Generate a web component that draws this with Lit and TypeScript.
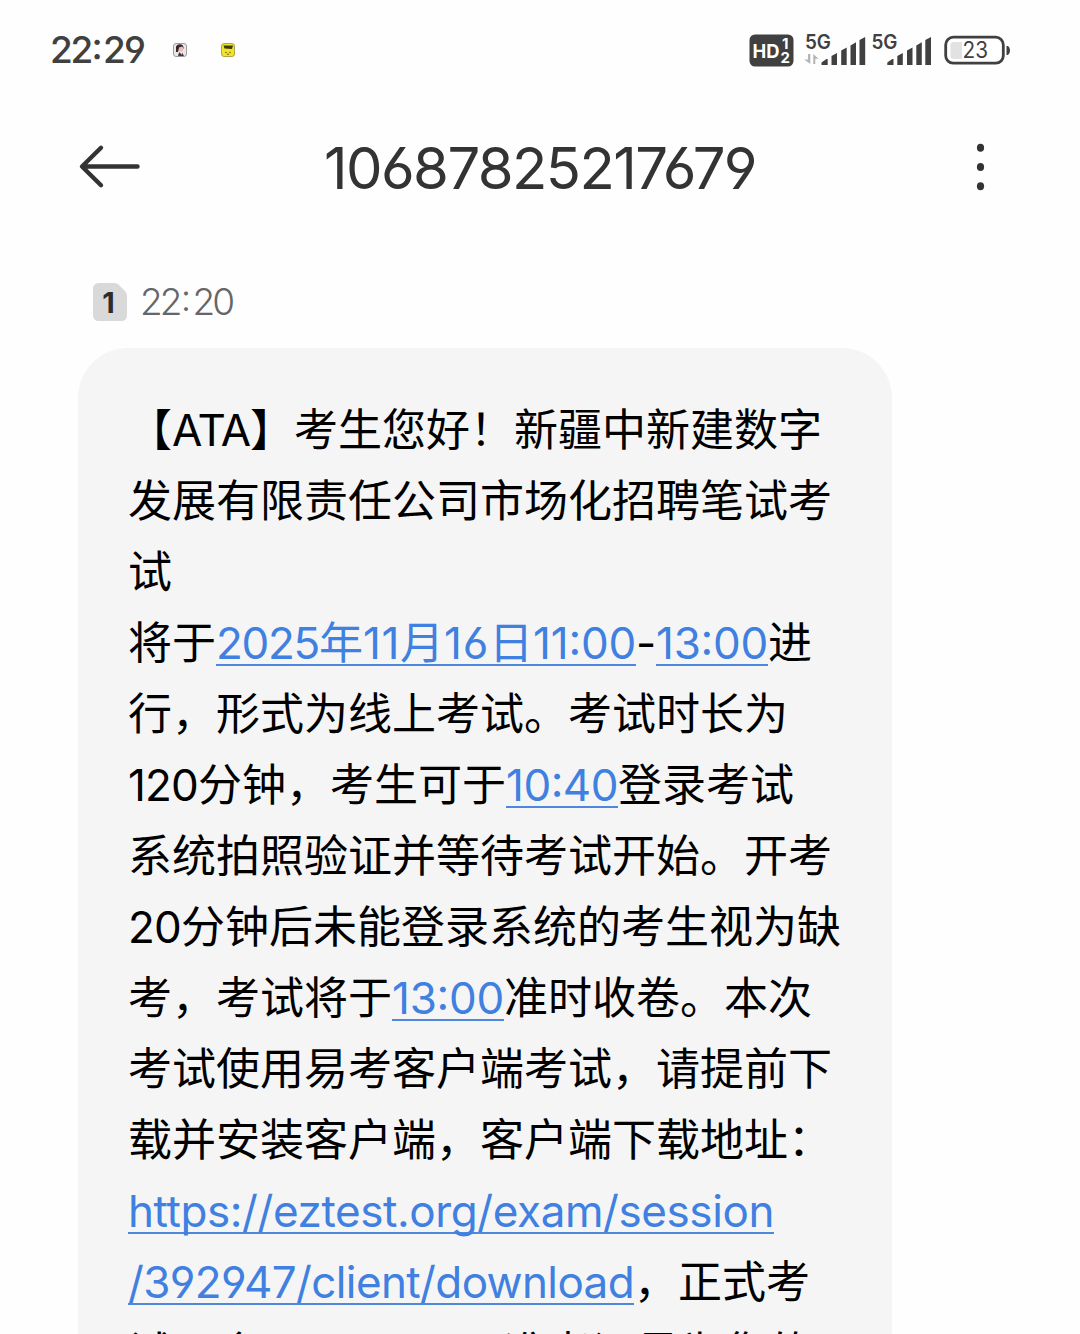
import { LitElement, html, css, svg } from "lit";
import { customElement } from "lit/decorators.js";

interface Run {
  text: string;
  link?: boolean;
  width?: number;
}

const t = (text: string, width?: number): Run => ({ text, width });
const a = (text: string, width?: number): Run => ({ text, width, link: true });

const LINES: Run[][] = [
  [t("【"), t("ATA", 78), t("】考生您好！新疆中新建数字")],
  [t("发展有限责任公司市场化招聘笔试考")],
  [t("试")],
  [
    t("将于"),
    a("2025", 103),
    a("年"),
    a("11", 37),
    a("月"),
    a("16", 45),
    a("日"),
    a("11:00", 103),
    t("-", 20),
    a("13:00", 112),
    t("进"),
  ],
  [t("行，形式为线上考试。考试时长为")],
  [t("120", 70), t("分钟，考生可于"), a("10:40", 112), t("登录考试")],
  [t("系统拍照验证并等待考试开始。开考")],
  [t("20", 53), t("分钟后未能登录系统的考生视为缺")],
  [t("考，考试将于"), a("13:00", 112), t("准时收卷。本次")],
  [t("考试使用易考客户端考试，请提前下")],
  [t("载并安装客户端，客户端下载地址：")],
  [a("https://eztest.org/exam/session", 646)],
  [a("/392947/client/download", 506), t("，正式考")],
  [t("试口令："), t("39294716", 200), t("准考证号为您的")],
];

const bars = svg`
  <path d="M0 28.5V26l5-3.5h1.2v6z"/>
  <path d="M10 28.5V19.6l5.5-3v11.9z"/>
  <path d="M19.7 28.5V14l5.5-3v17.5z"/>
  <path d="M29 28.5V9l5.5-3.2v22.7z"/>
  <path d="M38 28.5V3.5L43.7.5v28z"/>`;

@customElement("app-root")
export class AppRoot extends LitElement {
  static styles = css`
    :host {
      display: block;
      height: 1334px;
      overflow: hidden;
      background: #fefefe;
      color: #333;
      font-family: Inter, "Noto Sans CJK SC", sans-serif;
      font-feature-settings: "cv03", "cv04", "calt";
    }
    svg {
      display: block;
      flex: none;
      overflow: visible;
    }
    .status {
      display: flex;
      align-items: center;
      height: 100px;
      padding: 0 69px 0 50px;
      box-sizing: border-box;
    }
    .clock {
      display: flex;
      font-size: 37px;
      font-weight: 500;
      line-height: 46px;
      color: #404040;
      white-space: nowrap;
      width: 94px;
    }
    .colon {
      width: 13px;
      text-align: center;
      font-feature-settings: "case";
    }
    .app {
      margin-left: 29px;
    }
    .app + .app {
      margin-left: 34px;
    }
    .system {
      margin-left: auto;
    }
    .status-text {
      font-family: Inter, sans-serif;
    }
    .header {
      display: grid;
      grid-template-columns: 64px 1fr 64px;
      align-items: center;
      height: 134px;
      padding: 0 76px 0 78px;
    }
    .title {
      margin: 1px 2px 0 0;
      font-size: 58px;
      font-weight: 400;
      line-height: 80px;
      white-space: nowrap;
      text-align: center;
    }
    .more {
      justify-self: end;
      margin-right: 15px;
    }
    .stamp {
      display: flex;
      align-items: center;
      gap: 13px;
      height: 46px;
      padding: 45px 0 0 93px;
    }
    .time {
      display: flex;
      font-size: 37px;
      font-weight: 350;
      line-height: 46px;
      color: #666;
      white-space: nowrap;
    }
    .bubble {
      box-sizing: border-box;
      width: 814px;
      height: 1100px;
      margin: 23px 0 0 78px;
      padding: 47px 0 0 50px;
      border-radius: 50px;
      background: #f5f5f5;
      color: #000;
      font-size: 44px;
      line-height: 71px;
      text-spacing-trim: space-all;
    }
    .line {
      height: 71px;
      white-space: nowrap;
    }
    .run {
      display: inline-block;
      height: 71px;
      vertical-align: top;
    }
    .link {
      color: #4080e0;
      background: linear-gradient(#4d88dd, #4d88dd) 0 56px / 100% 2px no-repeat;
    }
  `;

  /* Spreads each measured run over its advance width. */
  firstUpdated() {
    this.renderRoot.querySelectorAll<HTMLElement>("[data-width]").forEach((el) => {
      const target = Number(el.dataset.width);
      const natural = el.getBoundingClientRect().width;
      el.style.letterSpacing = `${(target - natural) / (el.textContent ?? "").length}px`;
    });
  }

  private run(r: Run) {
    const cls = r.link ? "run link" : "run";
    return r.width
      ? html`<span class=${cls} data-width=${r.width}>${r.text}</span>`
      : html`<span class=${cls}>${r.text}</span>`;
  }

  render() {
    return html`
      <div class="status">
        <div class="clock"><span data-width="41">22</span><span class="colon">:</span><span data-width="41">29</span></div>
        <svg class="app" width="14" height="14" viewBox="0 0 14 14">
          <rect x=".5" y=".5" width="13" height="13" rx="2.5" fill="#e9e6ec" stroke="#888" stroke-width=".8"/>
          <path d="M3 9V3.5Q4 1 7.500 1.200Q11 2 10.500 6L9 3.500 6 5 5 9z" fill="#3a2528"/>
          <path d="M6 4.500 9.500 3.800 10 7.500 8 9 6 8z" fill="#e8bfb2"/>
          <path d="M5 13 6 9.500H9L11 13z" fill="#4b3438"/>
          <path d="M7 9h2l-.6 3z" fill="#fff"/>
        </svg>
        <svg class="app" width="14" height="14" viewBox="0 0 14 14">
          <rect x=".5" y=".5" width="13" height="13" rx="2.500" fill="#f2e22c" stroke="#9c9630" stroke-width=".8"/>
          <path d="M2.500 2.500h9.500L11 6 3.500 5.500z" fill="#3b3b10"/>
          <circle cx="5" cy="9.500" r=".7" fill="#4a4510"/>
          <circle cx="9" cy="9.500" r=".7" fill="#4a4510"/>
          <path d="M6 11q1 1 2 0" stroke="#4a4510" stroke-width=".8" fill="none"/>
        </svg>
        <svg class="system" width="262" height="36" viewBox="749 31 262 36" fill="#404040">
          <rect x="749.500" y="33.500" width="44" height="32" rx="5.500"/>
          <g class="status-text" fill="#fff" font-weight="700">
            <text x="752.500" y="56.500" font-size="19" textLength="27" lengthAdjust="spacingAndGlyphs">HD</text>
            <text x="782" y="48" font-size="15">1</text>
            <text x="780.500" y="62" font-size="15">2</text>
          </g>
          <g class="status-text" font-weight="600">
            <text x="805" y="48" font-size="19.500" textLength="26" lengthAdjust="spacingAndGlyphs">5G</text>
            <text x="871.500" y="48" font-size="19.500" textLength="26" lengthAdjust="spacingAndGlyphs">5G</text>
          </g>
          <path d="M808 53h2.300v10L804.200 58.500H808zM813.300 63h2V57.800h3.200L813.300 53z" fill="#b4b4b4"/>
          <g transform="translate(821.500 35.500)">${bars}</g>
          <g transform="translate(887.300 35.500)">${bars}</g>
          <rect x="945.700" y="36.200" width="57.600" height="26" rx="7.500" fill="#fff" stroke="#404040" stroke-width="2.800"/>
          <path d="M953.500 41H962V58H953.500Q950.500 58 950.500 55V44Q950.500 41 953.500 41z" fill="#e2e2e2"/>
          <path d="M1006.500 45H1008Q1010 46 1010 49.500T1008 54H1006.500z"/>
          <text class="status-text" x="962.500" y="57" font-size="22.500" textLength="25.500" lengthAdjust="spacingAndGlyphs">23</text>
        </svg>
      </div>
      <header class="header">
        <svg width="64" height="46" viewBox="78 144 64 46" fill="none" stroke="#333" stroke-width="4.400" stroke-linecap="round" stroke-linejoin="round">
          <path d="M101 147.800 82 166.500 101 185.200M82.500 166.500H137.500"/>
        </svg>
        <h1 class="title"><span data-width="432">10687825217679</span></h1>
        <svg class="more" width="16" height="50" viewBox="973 141.500 16 50" fill="#333">
          <ellipse cx="980.500" cy="147.300" rx="3.600" ry="4"/>
          <ellipse cx="980.500" cy="166.500" rx="3.600" ry="4"/>
          <ellipse cx="980.500" cy="185.700" rx="3.600" ry="4"/>
        </svg>
      </header>
      <div class="stamp">
        <svg width="34" height="38" viewBox="0 0 34 38">
          <path d="M6 0H21.500Q24 0 25.500 1.500L32 8Q34 10 34 12.500V32Q34 38 28 38H6Q0 38 0 32V6Q0 0 6 0z" fill="#d9d9d9"/>
          <text class="status-text" x="15.500" y="30" font-size="29" font-weight="700" text-anchor="middle" fill="#2c2c2c">1</text>
        </svg>
        <div class="time"><span data-width="39.5">22</span><span class="colon">:</span><span data-width="39.5">20</span></div>
      </div>
      <main class="bubble">
        ${LINES.map((line) => html`<div class="line">${line.map((r) => this.run(r))}</div>`)}
      </main>
    `;
  }
}
